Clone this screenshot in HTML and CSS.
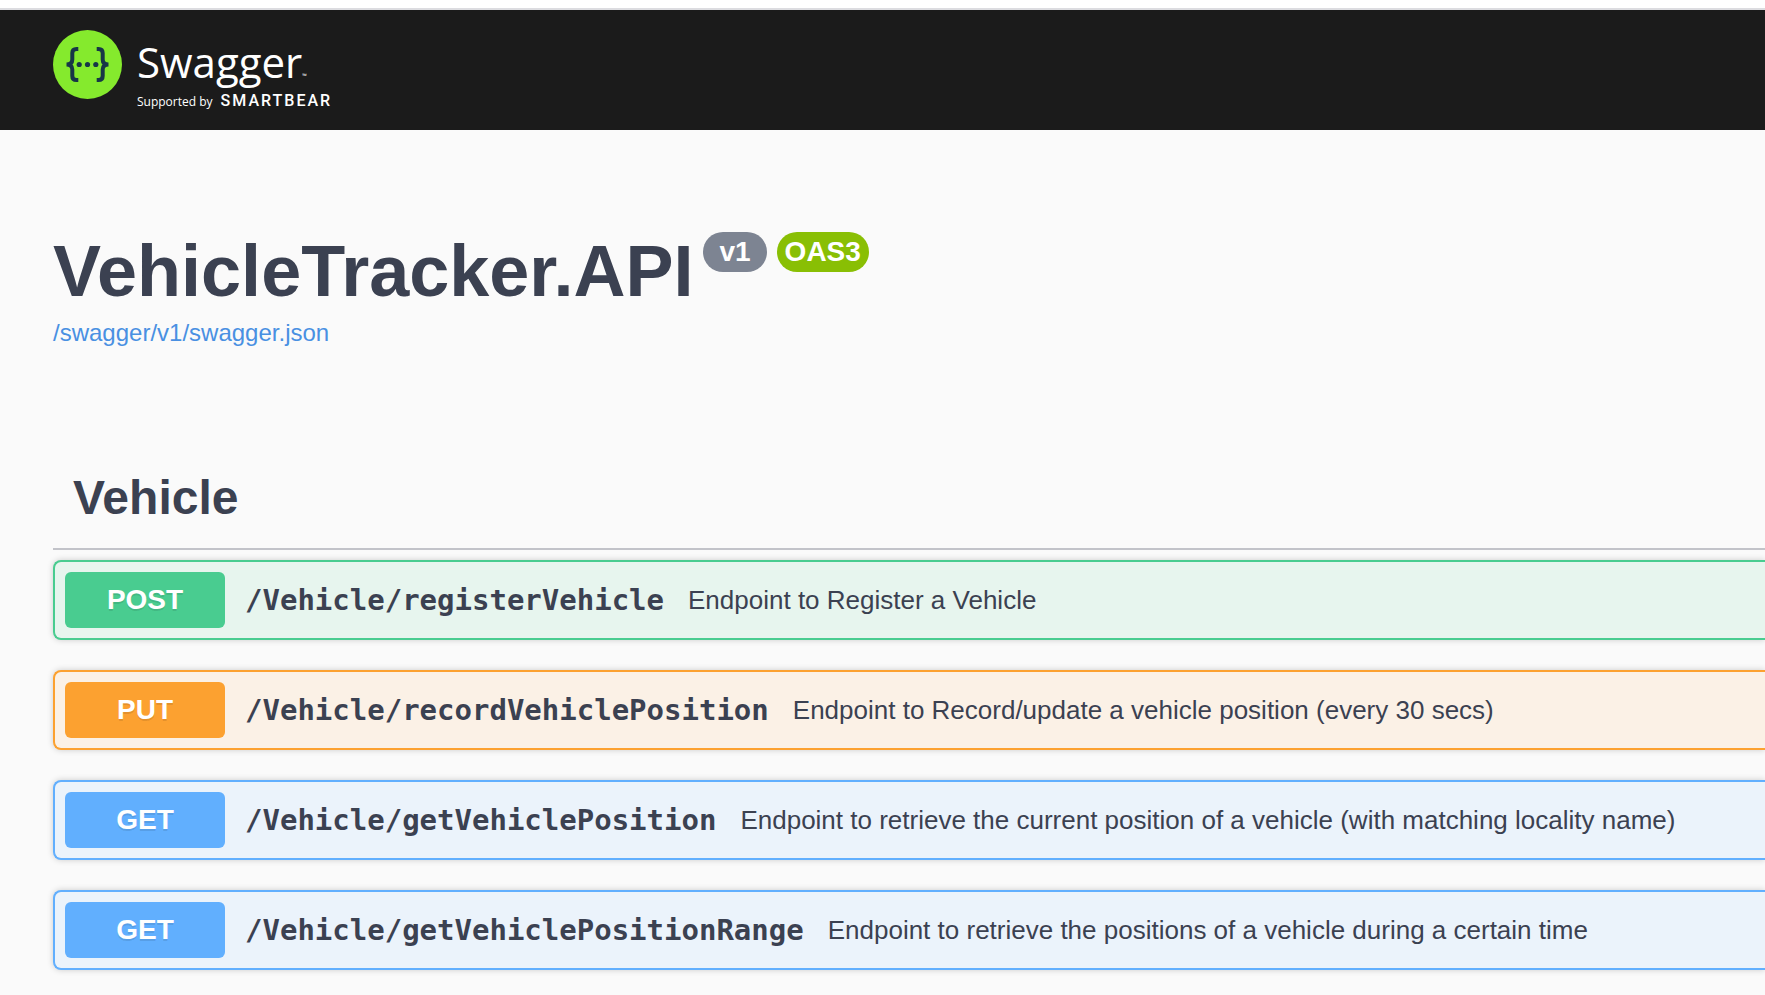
FILE: index.html
```html
<!DOCTYPE html>
<html lang="en">
<head>
<meta charset="utf-8">
<meta name="viewport" content="width=device-width, initial-scale=1">
<title>Swagger UI</title>
<link rel="stylesheet" href="styles.css">
</head>
<body>
<header class="topbar">
  <a class="logo" href="#">
    <svg class="logo-mark" viewBox="0 0 69 69" aria-hidden="true">
      <circle cx="34.5" cy="34.5" r="34.5" fill="#85ea2d"/>
      <g fill="none" stroke="#173647" stroke-width="4">
        <path d="M25.3 19H23.5Q19.3 19 19.3 23V29.5Q19.3 34.5 13.5 34.5Q19.3 34.5 19.3 39.5V46Q19.3 50 23.5 50H25.3"/>
        <path d="M43.7 19H45.5Q49.7 19 49.7 23V29.5Q49.7 34.5 55.5 34.5Q49.7 34.5 49.7 39.5V46Q49.7 50 45.5 50H43.7"/>
      </g>
      <g fill="#173647">
        <circle cx="26.2" cy="34.5" r="2.6"/>
        <circle cx="34.5" cy="34.5" r="2.6"/>
        <circle cx="42.8" cy="34.5" r="2.6"/>
      </g>
    </svg>
    <span class="logo-text">
      <span class="logo-name">Swagger<span class="logo-tm">™</span></span>
      <span class="logo-tagline">Supported by <strong class="logo-company">SMARTBEAR</strong></span>
    </span>
  </a>
</header>
<main class="content">
  <section class="info">
    <div class="info-heading">
      <h1 class="title">VehicleTracker.API</h1>
      <span class="badge badge-version">v1</span>
      <span class="badge badge-oas">OAS3</span>
    </div>
    <a class="spec-link" href="/swagger/v1/swagger.json">/swagger/v1/swagger.json</a>
  </section>
  <section class="tag">
    <h2 class="tag-name">Vehicle</h2>
    <div class="operations">
      <button class="operation post" type="button">
        <span class="method">POST</span>
        <span class="path">/Vehicle/registerVehicle</span>
        <span class="summary">Endpoint to Register a Vehicle</span>
      </button>
      <button class="operation put" type="button">
        <span class="method">PUT</span>
        <span class="path">/Vehicle/recordVehiclePosition</span>
        <span class="summary">Endpoint to Record/update a vehicle position (every 30 secs)</span>
      </button>
      <button class="operation get" type="button">
        <span class="method">GET</span>
        <span class="path">/Vehicle/getVehiclePosition</span>
        <span class="summary">Endpoint to retrieve the current position of a vehicle (with matching locality name)</span>
      </button>
      <button class="operation get" type="button">
        <span class="method">GET</span>
        <span class="path">/Vehicle/getVehiclePositionRange</span>
        <span class="summary">Endpoint to retrieve the positions of a vehicle during a certain time</span>
      </button>
    </div>
  </section>
</main>
</body>
</html>
```
FILE: styles.css
```css
* {
  box-sizing: border-box;
}

body {
  margin: 0;
  padding-top: 8px;
  background: linear-gradient(#fff 8px, #fafafa 8px);
  color: #3b4151;
  font-family: "Liberation Sans", Arial, sans-serif;
}

.topbar {
  padding: 20px 53px;
  border-top: 2px solid #dcdce0;
  background: #1b1b1b;
}

.logo {
  display: flex;
  align-items: flex-start;
  gap: 15px;
  width: max-content;
  height: 80px;
  color: #fff;
  font-family: "Open Sans", sans-serif;
  text-decoration: none;
}

.logo-mark {
  width: 69px;
  height: 69px;
}

.logo-text {
  display: flex;
  flex-direction: column;
  padding-top: 9px;
}

.logo-name {
  height: 52px;
  font-size: 42px;
  line-height: 46px;
}

.logo-tm {
  font-size: 6px;
}

.logo-tagline {
  display: flex;
  align-items: baseline;
  gap: 8px;
  font-size: 12px;
  line-height: 20px;
}

.logo-company {
  font-family: Roboto, sans-serif;
  font-size: 16px;
  font-weight: 500;
  letter-spacing: 2px;
}

.content {
  padding-left: 53px;
}

.info {
  padding: 100px 0 94px;
}

.info-heading {
  display: flex;
  align-items: flex-start;
  gap: 10px;
}

.title {
  margin: 0;
  font-size: 72px;
  line-height: 82px;
}

.badge {
  margin-top: 2px;
  border-radius: 20px;
  color: #fff;
  font-size: 28px;
  font-weight: 700;
  line-height: 40px;
}

.badge-version {
  padding: 0 16px;
  background: #7d8492;
}

.badge-oas {
  padding: 0 8px;
  background: #89bf04;
}

.spec-link {
  display: block;
  width: max-content;
  color: #4990e2;
  font-size: 24px;
  line-height: 42px;
  text-decoration: none;
}

.tag-name {
  margin: 0;
  padding: 20px;
  border-bottom: 2px solid #c2c3c9;
  font-size: 48px;
  line-height: 60px;
}

.operations {
  display: flex;
  flex-direction: column;
  gap: 30px;
  padding: 10px 0 30px;
}

.operation {
  display: flex;
  align-items: center;
  padding: 10px;
  border: 2px solid;
  border-right: 0;
  border-radius: 8px 0 0 8px;
  box-shadow: 0 0 6px rgba(0, 0, 0, 0.19);
  color: #3b4151;
  font-family: inherit;
  text-align: left;
  cursor: pointer;
}

.method {
  width: 160px;
  border-radius: 6px;
  color: #fff;
  font-size: 28px;
  font-weight: 700;
  line-height: 56px;
  text-align: center;
  text-shadow: 0 2px 0 rgba(0, 0, 0, 0.1);
}

.path {
  padding: 0 24px 0 20px;
  font-family: Consolas, "DejaVu Sans Mono", monospace;
  font-size: 29px;
  font-weight: 700;
}

.summary {
  font-size: 26px;
}

.post {
  border-color: #49cc90;
  background: #e7f5ee;
}

.post .method {
  background: #49cc90;
}

.put {
  border-color: #fca130;
  background: #fbf1e6;
}

.put .method {
  background: #fca130;
}

.get {
  border-color: #61affe;
  background: #ebf3fb;
}

.get .method {
  background: #61affe;
}
```
